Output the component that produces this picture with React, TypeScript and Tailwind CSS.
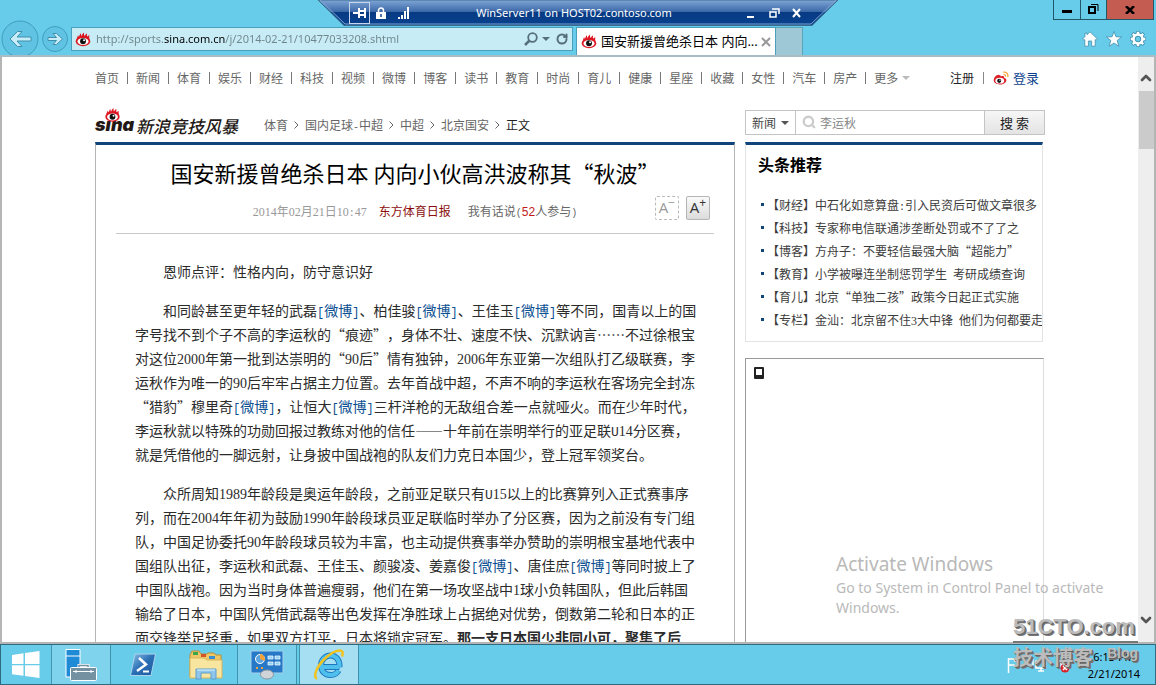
import React from 'react';
import { ChevronDown, ChevronUp, Lock, RotateCw, Search, Settings } from 'lucide-react';

const NAV = [
  '首页', '新闻', '体育', '娱乐', '财经', '科技', '视频', '微博', '博客', '读书', '教育',
  '时尚', '育儿', '健康', '星座', '收藏', '女性', '汽车', '房产',
];

const CRUMBS = ['体育', '国内足球-中超', '中超', '北京国安'];

const HEADLINES = [
  '【财经】中石化如意算盘:引入民资后可做文章很多',
  '【科技】专家称电信联通涉垄断处罚或不了了之',
  '【博客】方舟子：不要轻信最强大脑“超能力”',
  '【教育】小学被曝连坐制惩罚学生 考研成绩查询',
  '【育儿】北京“单独二孩”政策今日起正式实施',
  '【专栏】金汕：北京留不住3大中锋 他们为何都要走',
];

const PARAGRAPHS = [
  ['恩师点评：性格内向，防守意识好'],
  [
    '和同龄甚至更年轻的武磊[微博]、柏佳骏[微博]、王佳玉[微博]等不同，国青以上的国',
    '字号找不到个子不高的李运秋的“痕迹”，身体不壮、速度不快、沉默讷言……不过徐根宝',
    '对这位2000年第一批到达崇明的“90后”情有独钟，2006年东亚第一次组队打乙级联赛，李',
    '运秋作为唯一的90后牢牢占据主力位置。去年首战中超，不声不响的李运秋在客场完全封冻',
    '“猎豹”穆里奇[微博]，让恒大[微博]三杆洋枪的无敌组合差一点就哑火。而在少年时代，',
    '李运秋就以特殊的功勋回报过教练对他的信任——十年前在崇明举行的亚足联U14分区赛，',
    '就是凭借他的一脚远射，让身披中国战袍的队友们力克日本国少，登上冠军领奖台。',
  ],
  [
    '众所周知1989年龄段是奥运年龄段，之前亚足联只有U15以上的比赛算列入正式赛事序',
    '列，而在2004年年初为鼓励1990年龄段球员亚足联临时举办了分区赛，因为之前没有专门组',
    '队，中国足协委托90年龄段球员较为丰富，也主动提供赛事举办赞助的崇明根宝基地代表中',
    '国组队出征，李运秋和武磊、王佳玉、颜骏凌、姜嘉俊[微博]、唐佳庶[微博]等同时披上了',
    '中国队战袍。因为当时身体普遍瘦弱，他们在第一场攻坚战中1球小负韩国队，但此后韩国',
    '输给了日本，中国队凭借武磊等出色发挥在净胜球上占据绝对优势，倒数第二轮和日本的正',
    '面交锋举足轻重，如果双方打平，日本将锁定冠军。**那一支日本国少非同小可，聚集了后',
  ],
];

// Half-width characters take about half of a Chinese character.
const Mixed: React.FC<{ text: string }> = ({ text }) => (
  <>
    {text.split(/(\[微博\]|\*\*.+|[0-9]+|[A-Z]+|[:()\- ]+)/).map((part, i) => {
      if (part === '[微博]') {
        return (
          <a key={i} href="#weibo" className="text-[#0b4f92]">
            <span className="font-['Liberation_Mono',monospace] text-[12px] leading-none">[</span>
            微博
            <span className="font-['Liberation_Mono',monospace] text-[12px] leading-none">]</span>
          </a>
        );
      }
      if (part.startsWith('**')) return <strong key={i}>{part.slice(2)}</strong>;
      if (/^[0-9]+$/.test(part)) {
        return <span key={i} className="font-['Liberation_Serif',serif] leading-none">{part}</span>;
      }
      if (/^[A-Z]+$/.test(part)) {
        return <span key={i} className="font-['Liberation_Mono',monospace] text-[13px] leading-none">{part}</span>;
      }
      if (/^[:()\- ]+$/.test(part)) {
        return <span key={i} className="font-['Liberation_Mono',monospace] text-[10px] leading-none">{part}</span>;
      }
      return part;
    })}
  </>
);

const SinaEye: React.FC<{ className?: string }> = ({ className }) => (
  <svg viewBox="0 0 18 16" className={className} aria-hidden="true">
    <path
      d="M2 8C2 6 3 4 3.6 3.2C4 4 4 4.600 4.400 5.200C5 3.500 5.400 2.200 6.600 1C6.800 2.400 6.800 3.200 7.400 4.200C8 2.400 8.800 1 10.200 0C10 1.600 10.200 2.800 10.600 4C11.600 2.600 12.400 1.600 13.600 1.200C13.200 2.600 13.400 3.600 13.600 4.800C14.600 4 15.200 3.600 16.400 3.600C15.600 5 16 6 16.200 8Z"
      fill="#dd1823"
    />
    <ellipse cx="9" cy="10" rx="8.200" ry="5.600" fill="#dd1823" />
    <ellipse cx="9" cy="10.300" rx="6.200" ry="3.900" fill="#fff" />
    <circle cx="9" cy="10" r="3.300" fill="#111" />
    <circle cx="10.200" cy="8.900" r="1.100" fill="#fff" />
  </svg>
);

const WeiboIcon = () => (
  <svg viewBox="0 0 18 16" className="h-4 w-4" aria-hidden="true">
    <path d="M7 4.500C4 4 0.800 7.500 0.800 10.500C0.800 13.500 4 15.200 7.600 15.200C12 15.200 15 12.800 15 10.400C15 8.800 13.600 8.200 12.600 8C13 6 11.600 5.200 8.600 6.400C9 5.200 8.400 4.700 7 4.500Z" fill="#df2029" />
    <ellipse cx="7.600" cy="11" rx="5" ry="3.300" fill="#fff" />
    <circle cx="7" cy="11.200" r="2.300" fill="#111" />
    <circle cx="7.800" cy="10.500" r="0.700" fill="#fff" />
    <path d="M11.500 1.500C15 0.800 17.500 3.500 16.600 7M11.800 4.200C13.400 3.900 14.500 5 14.100 6.500" fill="none" stroke="#f6a93b" strokeWidth="1.400" />
  </svg>
);

const RdpBar = () => (
  <div className="absolute left-1/2 top-0 z-10 flex h-[26px] w-[520px] -translate-x-1/2 items-center pl-[31px] pr-9 font-['Noto_Sans',sans-serif] text-white">
    <svg viewBox="0 0 520 26" preserveAspectRatio="none" className="absolute inset-0 -z-10 h-full w-full" aria-hidden="true">
      <defs>
        <linearGradient id="rdp" x1="0" y1="0" x2="0" y2="1">
          <stop offset="0" stopColor="#7fa6d6" />
          <stop offset="0.460" stopColor="#3c68a8" />
          <stop offset="0.470" stopColor="#073a83" />
          <stop offset="1" stopColor="#0a428f" />
        </linearGradient>
      </defs>
      <path d="M0 0L26 25.500H494L520 0Z" fill="url(#rdp)" stroke="#3a6c8c" />
      <path d="M2 0L27 24H493L518 0" fill="none" stroke="#7ba3d0" />
    </svg>
    <button type="button" aria-label="Pin" className="flex h-[22px] w-[21px] items-center justify-center border border-[#c7d6ea]">
      <svg viewBox="0 0 14 12" className="h-3 w-[14px]" fill="none" stroke="#fff" strokeWidth="2" aria-hidden="true">
        <path d="M0 6H5M6 1V11M12 1V11M6 4H12M6 8H12" />
      </svg>
    </button>
    <svg viewBox="0 0 10 12" className="ml-1.5 h-3 w-[10px]" aria-hidden="true">
      <path d="M2.500 5V3.500A2.500 2.500 0 0 1 7.500 3.500V5" fill="none" stroke="#fff" strokeWidth="1.500" />
      <path d="M0 5H10V12H0ZM4.300 7V10H5.700V7Z" fill="#fff" fillRule="evenodd" />
    </svg>
    <svg viewBox="0 0 12 12" className="ml-3 h-3 w-3" fill="#fff" aria-hidden="true">
      <path d="M0 10H2V12H0ZM3 8H5V12H3ZM6 4H8V12H6ZM9 0H11V12H9Z" />
    </svg>
    <span className="flex-1 text-center text-[11px]">WinServer11 on HOST02.contoso.com</span>
    <svg viewBox="0 0 64 12" className="h-3 w-16" fill="none" stroke="#fff" strokeWidth="2" aria-hidden="true">
      <path d="M9 10H16" />
      <path d="M32 5H38V10H32ZM34 2H41V7" strokeWidth="1.500" />
      <path d="M55 2L62 10M62 2L55 10" />
    </svg>
  </div>
);

const Browser = () => (
  <header className="relative flex h-[57px] shrink-0 items-end justify-between overflow-hidden border-b-2 border-[#a9bcc3] bg-[#67cbea] font-['Noto_Sans','Noto_Sans_CJK_SC',sans-serif]">
    <RdpBar />
    <div className="flex items-end">
      <button type="button" aria-label="Back" className="w-10 pl-px">
        <svg viewBox="0 0 39 36" className="h-9 w-[39px]" fill="none" aria-hidden="true">
          <circle cx="19" cy="20" r="18" stroke="#3f9fbd" fill="#60c3e4" />
          <path d="M30 18H16L21 12.500H16.500L9 20L16.500 27.500H21L16 22H30Z" fill="#c9edf8" stroke="#3f8fac" />
        </svg>
      </button>
      <button type="button" aria-label="Forward" className="mb-0.5 w-[31px] pl-0.5">
        <svg viewBox="0 0 27 27" className="h-[27px] w-[27px]" fill="none" aria-hidden="true">
          <circle cx="13" cy="13" r="12.500" stroke="#3f9fbd" fill="#60c3e4" />
          <path d="M6 11.500H14.500L11 7.500H14.500L20.500 13L14.500 18.500H11L14.500 14.500H6Z" fill="#c9edf8" stroke="#3f8fac" />
        </svg>
      </button>
      <div className="mb-1 flex h-6 w-[502px] items-center border border-[#4a9fba] bg-[#c8ecf5] px-[3px]">
        <SinaEye className="h-[15px] w-4" />
        <input
          type="text"
          aria-label="Address"
          defaultValue="http://sports.sina.com.cn/j/2014-02-21/10477033208.shtml"
          className="ml-[5px] min-w-0 flex-1 bg-[linear-gradient(to_right,#6f858c_68px,#000_68px,#000_129px,#6f858c_129px)] bg-clip-text text-[11px] text-transparent outline-none"
        />
        <button type="button" aria-label="Search">
          <svg viewBox="0 0 14 14" className="h-[14px] w-[14px]" fill="none" stroke="#55707a" aria-hidden="true">
            <circle cx="8.500" cy="5.500" r="4.300" strokeWidth="1.800" />
            <path d="M5.500 8.500L1 13" strokeWidth="2.500" />
          </svg>
        </button>
        <span className="ml-1 border-x-4 border-t-4 border-x-transparent border-t-[#55707a]" />
        <button type="button" aria-label="Refresh" className="ml-1.5 mr-px"><RotateCw className="h-3 w-3 text-[#55707a]" strokeWidth={4} /></button>
      </div>
      <div className="ml-[3px] flex h-[28px] w-[200px] items-center border-x border-t border-[#4a9fba] bg-white px-1">
        <SinaEye className="h-[15px] w-4" />
        <span className="ml-1 flex-1 truncate whitespace-nowrap text-[13px]">国安新援曾绝杀日本 内向...</span>
        <button type="button" aria-label="Close tab">
          <svg viewBox="0 0 10 10" className="h-[10px] w-[10px]" stroke="#999" strokeWidth="2" aria-hidden="true"><path d="M1 1L9 9M9 1L1 9" /></svg>
        </button>
      </div>
      <button type="button" aria-label="New tab" className="h-[28px] w-[27px] border-r border-t border-[#5aa4bb] bg-[#9fc8d6]" />
    </div>
    <div className="flex h-full flex-col items-end justify-between pb-1 pr-0.5">
      <div className="flex h-5 border border-t-0 border-[#24566a]">
        <button type="button" aria-label="Minimize" className="flex w-[27px] items-center justify-center border-r border-[#24566a]">
          <span className="mt-1 h-[3px] w-[10px] bg-black" />
        </button>
        <button type="button" aria-label="Restore" className="flex w-[26px] items-center justify-center border-r border-[#24566a]">
          <svg viewBox="0 0 11 11" className="h-[11px] w-[11px]" fill="none" stroke="#000" aria-hidden="true">
            <path d="M1 3H7V9H1Z" strokeWidth="2" /><path d="M3 0.500H10V7" />
          </svg>
        </button>
        <button type="button" aria-label="Close" className="flex w-[46px] items-center justify-center bg-[#c45c52]">
          <svg viewBox="0 0 10 8" className="h-2 w-[10px]" stroke="#000" strokeWidth="2.500" aria-hidden="true"><path d="M1 0L9 8M9 0L1 8" /></svg>
        </button>
      </div>
      <div className="mb-1 flex gap-2 pr-2">
        <svg viewBox="0 0 16 16" className="h-4 w-4" fill="#fff" stroke="#3f8fac" strokeWidth="0.800" aria-hidden="true">
          <path d="M8 0.800L15.400 8L14 9.200L13.200 8.600V15.200H9.600V10H6.400V15.200H2.800V8.600L2 9.200L0.600 8L3 5.500V2H5V3.700Z" />
        </svg>
        <svg viewBox="0 0 16 16" className="h-4 w-4" fill="#fff" stroke="#3f8fac" strokeWidth="0.800" aria-hidden="true">
          <path d="M8 0.500L10 5.800L15.600 6L11.200 9.500L12.800 15.200L8 12L3.200 15.200L4.800 9.500L0.400 6L6 5.800Z" />
        </svg>
        <svg viewBox="0 0 16 16" className="h-4 w-4" fill="none" aria-hidden="true">
          <path d="M8 0V16M0 8H16M2.300 2.300L13.700 13.700M13.700 2.300L2.300 13.700" stroke="#3f8fac" strokeWidth="3.600" />
          <circle cx="8" cy="8" r="4.600" stroke="#3f8fac" strokeWidth="4.200" />
          <path d="M8 0.700V4M8 12V15.300M0.700 8H4M12 8H15.300M2.800 2.800L5 5M11 11L13.200 13.200M13.200 2.800L11 5M5 11L2.800 13.200" stroke="#fff" strokeWidth="2.400" />
          <circle cx="8" cy="8" r="4.400" stroke="#fff" strokeWidth="2.800" />
          <circle cx="8" cy="8" r="2.800" fill="#67cbea" stroke="#3f8fac" strokeWidth="0.800" />
        </svg>
      </div>
    </div>
  </header>
);

const TopNav = () => (
  <nav className="flex h-[42px] items-center justify-between text-[#666]">
    <ul className="flex items-center">
      {NAV.map((item) => (
        <li key={item} className="flex items-center">
          <a href="#nav">{item}</a>
          <span className="mx-2 h-3 w-px bg-[#777]" />
        </li>
      ))}
      <li className="flex items-center gap-1">
        <a href="#more">更多</a>
        <span className="border-x-4 border-t-4 border-x-transparent border-t-[#bbb]" />
      </li>
    </ul>
    <div className="flex items-center pr-1.5">
      <a href="#register" className="text-[#222]">注册</a>
      <span className="mx-[9px] h-3 w-px bg-[#888]" />
      <WeiboIcon />
      <a href="#login" className="ml-1 text-[13px] text-[#0b3f8c]">登录</a>
    </div>
  </nav>
);

const Masthead = () => (
  <div className="flex h-[43px] justify-between pt-[11px]">
    <div className="flex">
      <a href="#home" className="relative flex h-7 w-[143px] items-center text-[#231815]">
        <span className="pt-0.5 font-['Inter',sans-serif] text-lg font-black italic leading-none">sina</span>
        <SinaEye className="absolute -top-0.5 left-[9px] h-[14px] w-[17px]" />
        <span className="absolute right-0 whitespace-nowrap pt-0.5 text-[17px] font-medium italic leading-none">新浪竞技风暴</span>
      </a>
      <ol className="ml-[26px] flex items-center pb-0.5 text-[#666]">
        {CRUMBS.map((crumb) => (
          <li key={crumb} className="flex items-center">
            <a href="#crumb"><Mixed text={crumb} /></a>
            <svg viewBox="0 0 5 8" className="mx-1.5 h-2 w-[5px]" fill="none" stroke="#666" aria-hidden="true"><path d="M0.500 0.500L4 4L0.500 7.500" /></svg>
          </li>
        ))}
        <li className="text-[#222]">正文</li>
      </ol>
    </div>
    <form className="flex h-[25px] w-[300px] border border-[#c4c4c4]" onSubmit={(e) => e.preventDefault()}>
      <div className="relative flex w-[50px] items-center border-r border-[#c4c4c4]">
        <select aria-label="搜索类别" className="h-full w-full appearance-none pl-1.5 text-xs text-[#444] outline-none">
          <option>新闻</option>
        </select>
        <span className="pointer-events-none absolute right-1.5 border-x-4 border-t-4 border-x-transparent border-t-[#555]" />
      </div>
      <Search className="ml-1.5 mt-1 h-[14px] w-[14px] text-[#ccc]" strokeWidth={4} />
      <input type="text" aria-label="搜索" defaultValue="李运秋" className="ml-1 min-w-0 flex-1 text-xs text-[#888] outline-none" />
      <button type="submit" className="w-[60px] border-l border-[#c4c4c4] bg-gradient-to-b from-[#f6f6f6] to-[#e4e4e4] text-[13px] text-[#222]">搜 索</button>
    </form>
  </div>
);

const Article = () => (
  <article className="w-[640px] border-x border-t-3 border-x-[#b5b5b5] border-t-[#12447c] px-5">
    <h1 className="mt-2 text-center text-[22px] leading-[38px] text-black">国安新援曾绝杀日本 内向小伙高洪波称其“秋波”</h1>
    <div className="grid grid-cols-[1fr_auto_1fr] items-center border-b border-[#c8c8c8] pb-[9px]">
      <span />
      <p className="flex pt-2 leading-6">
        <time className="text-[#999]"><Mixed text="2014年02月21日10:47" /></time>
        <a href="#source" className="ml-3 text-[#8b0e0e]">东方体育日报</a>
        <a href="#comments" className="ml-[17px] text-[#666]">
          我有话说<Mixed text="(" /><span className="font-['Liberation_Sans',sans-serif] text-[#c21a1a]">52</span>人参与<Mixed text=")" />
        </a>
      </p>
      <div className="flex justify-end gap-[7px] pr-1 text-[15px]">
        <button type="button" aria-label="减小字号" className="flex h-6 w-6 justify-center rounded-xs border border-dashed border-[#bbb] font-['Open_Sans',sans-serif] text-[#999]">
          A<sup className="top-0 text-xs leading-none">−</sup>
        </button>
        <button type="button" aria-label="增大字号" className="flex h-6 w-6 justify-center rounded-xs border border-[#b5b5b5] bg-gradient-to-b from-[#fafafa] to-[#dcdcdc] font-['Open_Sans',sans-serif] text-[#333]">
          A<sup className="top-0 text-xs leading-none">+</sup>
        </button>
      </div>
    </div>
    <div className="space-y-[15px] px-[19px] pt-[25px] text-sm leading-6 text-[#2b2b2b]">
      {PARAGRAPHS.map((lines, i) => (
        <p key={i}>
          {lines.map((line, n) => (
            <span key={n} className="block h-6 whitespace-nowrap first:pl-7"><Mixed text={line} /></span>
          ))}
        </p>
      ))}
    </div>
  </article>
);

const Sidebar = () => (
  <aside className="flex w-[300px] flex-col">
    <section className="mr-0.5 h-[200px] overflow-hidden border border-t-3 border-[#e3e3e3] border-t-[#12447c] pl-3">
      <h2 className="pt-[5px] text-base font-bold leading-7 text-black">头条推荐</h2>
      <ul className="mt-[15px] text-[#3c3c3c]">
        {HEADLINES.map((item) => (
          <li key={item} className="flex h-[23px] items-center whitespace-nowrap pl-[3px]">
            <span className="mr-[3px] h-[3px] w-[3px] shrink-0 bg-[#12447c]" />
            <a href="#news"><Mixed text={item} /></a>
          </li>
        ))}
      </ul>
    </section>
    <section className="mr-px mt-4 h-[320px] border border-[#ddd] border-l-[#999] border-t-[#999] p-2">
      <div className="h-3 w-[10px] rounded-[1px] border-2 border-b-4 border-[#222]" />
    </section>
  </aside>
);

const Scrollbar = () => (
  <div className="flex w-4 shrink-0 flex-col items-center bg-[#eee]">
    <button type="button" aria-label="Scroll up" className="flex h-[34px] items-center pt-2"><ChevronUp className="h-4 w-4 text-[#555]" strokeWidth={4} /></button>
    <div className="h-[58px] w-[15px] bg-[#cbcbcb]" />
    <button type="button" aria-label="Scroll down" className="mb-3.5 mt-auto"><ChevronDown className="h-4 w-4 text-[#555]" strokeWidth={4} /></button>
  </div>
);

const Taskbar = () => (
  <footer className="flex h-[41px] shrink-0 justify-between border border-[#2f6b80] bg-[#67cbea]">
    <div className="flex">
      <button type="button" aria-label="Start" className="flex w-[51px] items-center justify-center border-r border-[#4596b0]">
        <svg viewBox="0 0 28 27" className="h-[27px] w-7" fill="#fff" aria-hidden="true">
          <path d="M0 4L11.500 2.300V13H0ZM13 2.100L27.500 0V13H13ZM0 14.200H11.500V24.800L0 23.200ZM13 14.200H27.500V27L13 25Z" />
        </svg>
      </button>
      <button type="button" aria-label="Server Manager" className="flex w-[59px] items-center justify-center border-r border-[#3f93ad] bg-[#80d3ed]">
        <svg viewBox="0 0 32 32" className="h-8 w-8" aria-hidden="true">
          <path d="M1 0.500H15V28H1Z" fill="#1f8ad6" stroke="#fff" />
          <path d="M1 7H15" stroke="#fff" />
          <path d="M14 19V16.500H23V19" fill="none" stroke="#fff" strokeWidth="3" />
          <path d="M14 19V16.500H23V19" fill="none" stroke="#7491a2" strokeWidth="1.500" />
          <rect x="5.500" y="18.500" width="26" height="13" rx="1" fill="#7491a2" stroke="#fff" />
          <path d="M8 22.500H29M11 21V24M26 21V24" stroke="#fff" />
        </svg>
      </button>
      <button type="button" aria-label="PowerShell" className="flex w-[64px] items-center justify-center">
        <svg viewBox="0 0 28 24" className="h-6 w-7" aria-hidden="true">
          <defs>
            <linearGradient id="ps" x1="0" y1="0" x2="1" y2="1"><stop offset="0" stopColor="#8ec0e6" /><stop offset="0.500" stopColor="#2a6eb5" /><stop offset="1" stopColor="#1f5a9c" /></linearGradient>
          </defs>
          <path d="M6 1H26.500L22 22.500H1.500Z" fill="url(#ps)" stroke="#a9d5ee" strokeLinejoin="round" />
          <path d="M10 5L17 11.500L8 18" fill="none" stroke="#fff" strokeWidth="2.500" />
          <path d="M14 18.500H20" stroke="#fff" strokeWidth="2" />
        </svg>
      </button>
      <button type="button" aria-label="File Explorer" className="flex w-[62px] items-center justify-center">
        <svg viewBox="0 0 34 30" className="h-[30px] w-[34px]" aria-hidden="true">
          <path d="M1 5L3 1H10L12 4H18L19 3H25L27 5H32V27H1Z" fill="#eec766" stroke="#b98e35" />
          <path d="M4 2H9V5H4Z" fill="#3aa64b" /><path d="M12 4H17V7H12Z" fill="#d2552a" /><path d="M20 6H26V9H20Z" fill="#3b8fd0" />
          <path d="M1 8H15L18 10H33V28H1Z" fill="#f8e6a0" stroke="#d9b65c" />
          <path d="M7 29V19H27V29H22V23H12V29Z" fill="#8fc7ec" stroke="#5d9dcb" />
          <path d="M8 20H26" stroke="#e2f3fc" />
        </svg>
      </button>
      <button type="button" aria-label="Control Panel" className="flex w-[60px] items-center justify-center border-x border-[#3f93ad] bg-[#7bd1ec]">
        <svg viewBox="0 0 34 30" className="h-[30px] w-[34px]" aria-hidden="true">
          <rect x="1" y="1" width="32" height="22" rx="1" fill="#2878c8" stroke="#a4d0ee" />
          <circle cx="10" cy="9" r="4.500" fill="#5ba5e2" stroke="#fff" />
          <path d="M10 9V4A5 5 0 0 1 14.500 11Z" fill="#f3a23a" />
          <path d="M18 6H23V9H18ZM25 6H30V9H25ZM18 12H23V15H18ZM25 12H30V15H25Z" fill="#8fd0f5" stroke="#fff" strokeWidth="0.700" />
          <path d="M6 18H8M11 18H13" stroke="#f3a23a" strokeWidth="2" />
          <ellipse cx="17" cy="24.500" rx="6.500" ry="4.500" fill="#cfd4d8" stroke="#8b949b" />
        </svg>
      </button>
      <button type="button" aria-label="Internet Explorer" className="ml-0.5 flex w-[60px] items-center justify-center border-x border-[#3f93ad] bg-[#a6dff2]">
        <svg viewBox="0 0 32 32" className="h-8 w-8" fill="none" aria-hidden="true">
          <path d="M26.500 18H9M26.500 18C27 11 23 6.500 17.500 6.500C12 6.500 8 11 8 16.500C8 22 12 26 17.500 26C21 26 24 24.500 25.500 21.500" stroke="#1d77bd" strokeWidth="6" />
          <path d="M26.500 18H9M26.500 18C27 11 23 6.500 17.500 6.500C12 6.500 8 11 8 16.500C8 22 12 26 17.500 26C21 26 24 24.500 25.500 21.500" stroke="#4fc0ee" strokeWidth="4" />
          <path d="M4 30C0 28 3 18 12 9.500C20 2 28 -0.500 29.500 3C30 4.500 29.500 6 29 7.500" stroke="#f2c21f" strokeWidth="2.500" />
        </svg>
      </button>
    </div>
    <div className="flex items-center pr-[15px] font-['Noto_Sans',sans-serif] text-[11px] text-black">
      <svg viewBox="0 0 66 16" className="mr-[15px] h-4 w-[66px]" fill="none" stroke="#fff" strokeWidth="1.500" aria-hidden="true">
        <path d="M1.500 1V16M2 2H7L8 4H13V9H8L7 8H2" />
        <path d="M29 4H39V11H29ZM31 14H37M34 11V14M26 2V8" />
        <path d="M50 6H53L57 2V12L53 9H50Z" fill="#fff" />
        <circle cx="58" cy="11" r="4.500" fill="#d8232a" stroke="none" />
        <path d="M56 9L60 13M60 9L56 13" />
      </svg>
      <div className="text-center leading-[17px]">
        <div>6:13 PM</div>
        <div>2/21/2014</div>
      </div>
    </div>
  </footer>
);

const Watermarks = () => (
  <>
    <div className="pointer-events-none absolute bottom-[67px] right-8 w-[288px] font-['Noto_Sans',sans-serif] text-sm leading-5 text-[#b9b9b9]">
      <div className="text-[19px] leading-7">Activate Windows</div>
      <div>Go to System in Control Panel to activate Windows.</div>
    </div>
    <div className="pointer-events-none absolute bottom-3.5 right-[18px] w-[125px] font-bold text-[#bcbcbc] [text-shadow:1px_1px_0_#666,2px_2px_0_#777]">
      <div className="border-b-2 border-[#777] font-['Liberation_Sans',sans-serif] text-[22px] leading-7">51CTO.com</div>
      <div className="flex justify-between leading-6">
        <span className="text-xl leading-7">技术博客</span>
        <span className="font-['Liberation_Sans',sans-serif] text-sm leading-5">Blog</span>
      </div>
    </div>
  </>
);

export default function App() {
  return (
    <div lang="zh-CN" className="relative flex h-screen flex-col overflow-hidden bg-white font-['Noto_Sans_CJK_SC',sans-serif] text-xs [text-spacing-trim:space-all]">
      <Browser />
      <div className="flex min-h-0 flex-1 border-x-2 border-b-2 border-[#b5b5b5]">
        <main className="min-w-0 flex-1 overflow-hidden">
          <div className="mx-auto w-[950px]">
            <TopNav />
            <Masthead />
            <div className="flex items-start justify-between">
              <Article />
              <Sidebar />
            </div>
          </div>
        </main>
        <Scrollbar />
      </div>
      <Taskbar />
      <Watermarks />
    </div>
  );
}
